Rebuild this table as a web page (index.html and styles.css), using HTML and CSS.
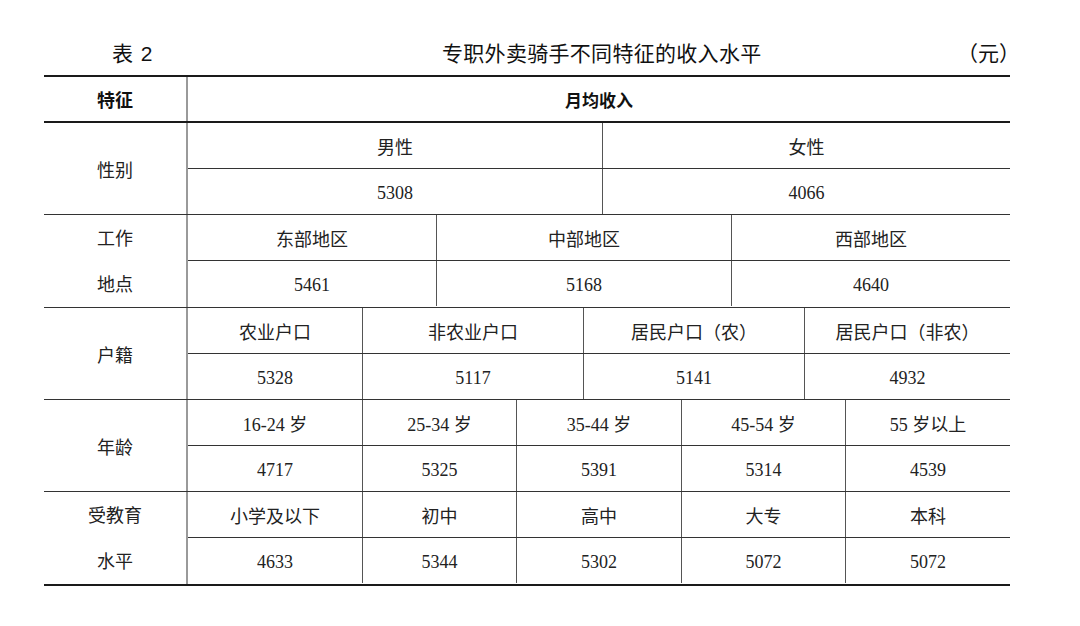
FILE: index.html
```html
<!DOCTYPE html>
<html lang="zh">
<head>
<meta charset="utf-8">
<title>专职外卖骑手不同特征的收入水平</title>
<link rel="stylesheet" href="styles.css">
</head>
<body>
<div class="page">
  <div class="caption">
    <span class="num">表 2</span>
    <span class="title">专职外卖骑手不同特征的收入水平</span>
    <span class="unit">（元）</span>
  </div>
  <div class="table">
    <div class="head">
      <div class="label hd">特征</div>
      <div class="hcell hd">月均收入</div>
    </div>

    <div class="sec">
      <div class="label">性别</div>
      <div class="data">
        <div class="row g-sex"><div class="cell">男性</div><div class="cell">女性</div></div>
        <div class="row g-sex"><div class="cell">5308</div><div class="cell">4066</div></div>
      </div>
    </div>

    <div class="sec">
      <div class="label two"><span>工作</span><span>地点</span></div>
      <div class="data">
        <div class="row g-area"><div class="cell">东部地区</div><div class="cell">中部地区</div><div class="cell">西部地区</div></div>
        <div class="row g-area"><div class="cell">5461</div><div class="cell">5168</div><div class="cell">4640</div></div>
      </div>
    </div>

    <div class="sec">
      <div class="label">户籍</div>
      <div class="data">
        <div class="row g-hukou"><div class="cell">农业户口</div><div class="cell">非农业户口</div><div class="cell">居民户口（农）</div><div class="cell">居民户口（非农）</div></div>
        <div class="row g-hukou"><div class="cell">5328</div><div class="cell">5117</div><div class="cell">5141</div><div class="cell">4932</div></div>
      </div>
    </div>

    <div class="sec">
      <div class="label">年龄</div>
      <div class="data">
        <div class="row g-five"><div class="cell">16-24 岁</div><div class="cell">25-34 岁</div><div class="cell">35-44 岁</div><div class="cell">45-54 岁</div><div class="cell">55 岁以上</div></div>
        <div class="row g-five"><div class="cell">4717</div><div class="cell">5325</div><div class="cell">5391</div><div class="cell">5314</div><div class="cell">4539</div></div>
      </div>
    </div>

    <div class="sec last">
      <div class="label two"><span>受教育</span><span>水平</span></div>
      <div class="data">
        <div class="row g-five"><div class="cell">小学及以下</div><div class="cell">初中</div><div class="cell">高中</div><div class="cell">大专</div><div class="cell">本科</div></div>
        <div class="row g-five"><div class="cell">4633</div><div class="cell">5344</div><div class="cell">5302</div><div class="cell">5072</div><div class="cell">5072</div></div>
      </div>
    </div>
  </div>
</div>
</body>
</html>
```

FILE: styles.css
```css
* { box-sizing: border-box; }

html, body {
  margin: 0;
  padding: 0;
  background: #ffffff;
}

body {
  font-family: "Liberation Serif", "Noto Sans CJK SC", serif;
  color: #222;
}

.page {
  width: 1010px;
  padding-left: 44px;
}

.caption {
  height: 75px;
  padding-top: 28px;
  display: flex;
  align-items: center;
  font-family: "Liberation Sans", "Noto Sans CJK SC", sans-serif;
  font-size: 21px;
  color: #111;
}

.num {
  width: 398px;
  padding-left: 68px;
  word-spacing: 2px;
}

.title {
  letter-spacing: 0.3px;
}

.unit {
  margin-left: auto;
  margin-right: -10px;
}

.table {
  width: 966px;
  border-top: 2px solid #1a1a1a;
}

.head {
  display: flex;
  height: 46px;
  border-bottom: 2px solid #1a1a1a;
}

.hd {
  font-family: "Noto Sans CJK SC", sans-serif;
  font-weight: 700;
  font-size: 17px;
  color: #111;
}

.label {
  width: 144px;
  flex: none;
  border-right: 2px solid #9a9a9a;
  display: flex;
  align-items: center;
  justify-content: center;
  font-size: 18px;
}

.label.two {
  flex-direction: column;
}

.label.two span {
  height: 46px;
  line-height: 48px;
}

.hcell {
  flex: 1;
  display: flex;
  align-items: center;
  justify-content: center;
}

.sec {
  display: flex;
  border-bottom: 1px solid #333;
}

.sec.last {
  border-bottom: 2px solid #1a1a1a;
}

.data {
  flex: 1;
  display: flex;
  flex-direction: column;
}

.row {
  display: grid;
  height: 46px;
}

.row:first-child {
  border-bottom: 1px solid #333;
}

.row:last-child {
  height: 45px;
}

.row:last-child .cell {
  padding-top: 3px;
}

.g-sex { grid-template-columns: 414px 1fr; }
.g-area { grid-template-columns: 248px 295px 1fr; }
.g-hukou { grid-template-columns: 174px 221px 221px 1fr; }
.g-five { grid-template-columns: 174px 154px 165px 164px 1fr; }

.cell {
  display: flex;
  align-items: center;
  justify-content: center;
  font-size: 18px;
  color: #222;
}

.cell + .cell {
  border-left: 1px solid #555;
}
```
